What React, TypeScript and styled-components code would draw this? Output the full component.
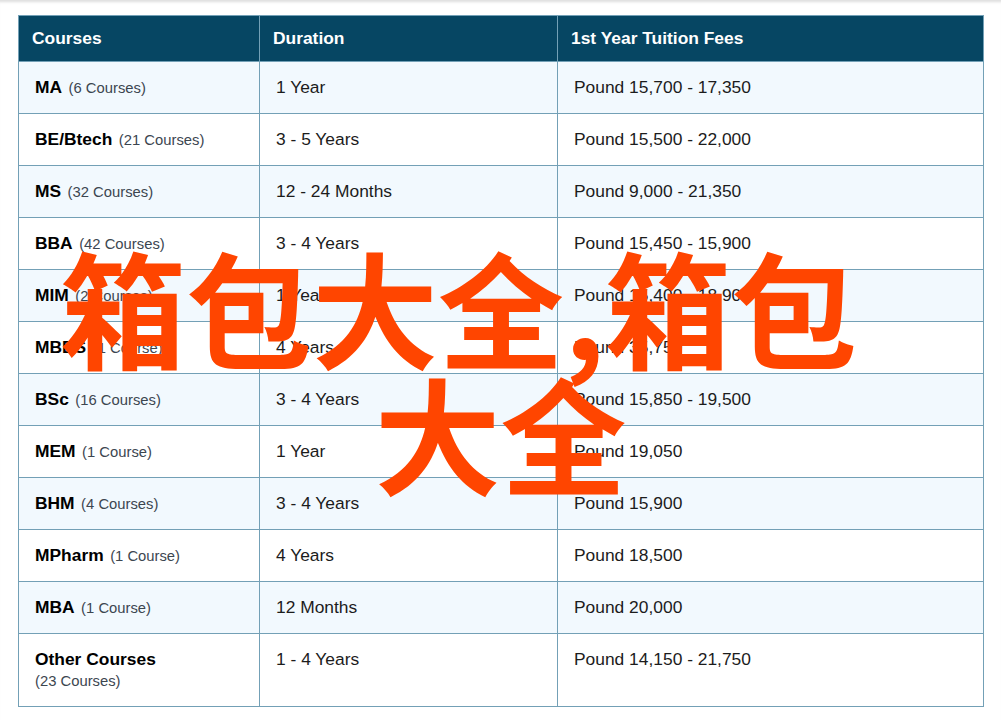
import styled, { createGlobalStyle } from "styled-components";

const courses = [
  { name: "MA", count: "(6 Courses)", duration: "1 Year", fees: "Pound 15,700 - 17,350" },
  { name: "BE/Btech", count: "(21 Courses)", duration: "3 - 5 Years", fees: "Pound 15,500 - 22,000" },
  { name: "MS", count: "(32 Courses)", duration: "12 - 24 Months", fees: "Pound 9,000 - 21,350" },
  { name: "BBA", count: "(42 Courses)", duration: "3 - 4 Years", fees: "Pound 15,450 - 15,900" },
  { name: "MIM", count: "(2 Courses)", duration: "1 Year", fees: "Pound 15,400 - 18,900" },
  { name: "MBBS", count: "(1 Course)", duration: "4 Years", fees: "Pound 35,750" },
  { name: "BSc", count: "(16 Courses)", duration: "3 - 4 Years", fees: "Pound 15,850 - 19,500" },
  { name: "MEM", count: "(1 Course)", duration: "1 Year", fees: "Pound 19,050" },
  { name: "BHM", count: "(4 Courses)", duration: "3 - 4 Years", fees: "Pound 15,900" },
  { name: "MPharm", count: "(1 Course)", duration: "4 Years", fees: "Pound 18,500" },
  { name: "MBA", count: "(1 Course)", duration: "12 Months", fees: "Pound 20,000" },
];

const GlobalStyle = createGlobalStyle`
  html, body {
    margin: 0;
    padding: 0;
    background: #fff;
    font-family: "Liberation Sans", Arial, sans-serif;
  }
`;

const Page = styled.div`
  position: relative;
  height: 720px;
  padding: 15px 18px 0;
  box-sizing: border-box;
  overflow: hidden;
  box-shadow: inset 0 4px 3px -2px #dedede;
`;

const Table = styled.table`
  width: 965px;
  border-collapse: collapse;
  table-layout: fixed;
`;

const HeadCell = styled.th<{ width: number }>`
  width: ${(props) => props.width}px;
  height: 46px;
  padding: 0 13px;
  box-sizing: border-box;
  border: 1px solid #73a0b6;
  background-color: #064663;
  color: #fff;
  font-size: 17.4px;
  font-weight: 700;
  text-align: left;
`;

const Row = styled.tr<{ $shaded: boolean; $height: number }>`
  height: ${(props) => props.$height}px;
  background-color: ${(props) => (props.$shaded ? "#f2f9fe" : "#fff")};
`;

const Cell = styled.td`
  padding: 0 16px;
  box-sizing: border-box;
  border: 1px solid #73a0b6;
  color: #1c1c1c;
  font-size: 17.4px;
  vertical-align: middle;
`;

const TopCell = styled(Cell)`
  padding-top: 15px;
  padding-bottom: 14px;
  vertical-align: top;
`;

const Name = styled.strong`
  color: #000;
  font-size: 17.4px;
  margin-right: 6.5px;
`;

const Count = styled.span`
  color: #3c4650;
  font-size: 14.8px;
`;

const CountBelow = styled(Count)`
  display: block;
  margin-top: 3px;
`;

const Overlay = styled.div`
  position: absolute;
  top: 242px;
  left: 0;
  width: 1001px;
  color: #ff4500;
  font-family: "Noto Sans CJK SC", sans-serif;
  font-size: 126px;
  font-weight: 700;
  line-height: 126px;
  text-align: center;
  white-space: nowrap;
`;

const OverlayLine = styled.div<{ $trail: number }>`
  padding-right: ${(props) => props.$trail}px;
`;

const App = () => {
  return (
    <Page>
      <GlobalStyle />
      <Table>
        <thead>
          <tr>
            <HeadCell width={241}>Courses</HeadCell>
            <HeadCell width={298}>Duration</HeadCell>
            <HeadCell width={426}>1st Year Tuition Fees</HeadCell>
          </tr>
        </thead>
        <tbody>
          {courses.map((course, index) => (
            <Row key={course.name} $shaded={index % 2 === 0} $height={52}>
              <Cell>
                <Name>{course.name}</Name>
                <Count>{course.count}</Count>
              </Cell>
              <Cell>{course.duration}</Cell>
              <Cell>{course.fees}</Cell>
            </Row>
          ))}
          <Row $shaded={false} $height={73}>
            <TopCell>
              <Name>Other Courses</Name>
              <CountBelow>(23 Courses)</CountBelow>
            </TopCell>
            <TopCell>1 - 4 Years</TopCell>
            <TopCell>Pound 14,150 - 21,750</TopCell>
          </Row>
        </tbody>
      </Table>
      <Overlay>
        <OverlayLine $trail={84}>箱包大全,箱包</OverlayLine>
        <OverlayLine $trail={0}>大全</OverlayLine>
      </Overlay>
    </Page>
  );
};

export default App;
